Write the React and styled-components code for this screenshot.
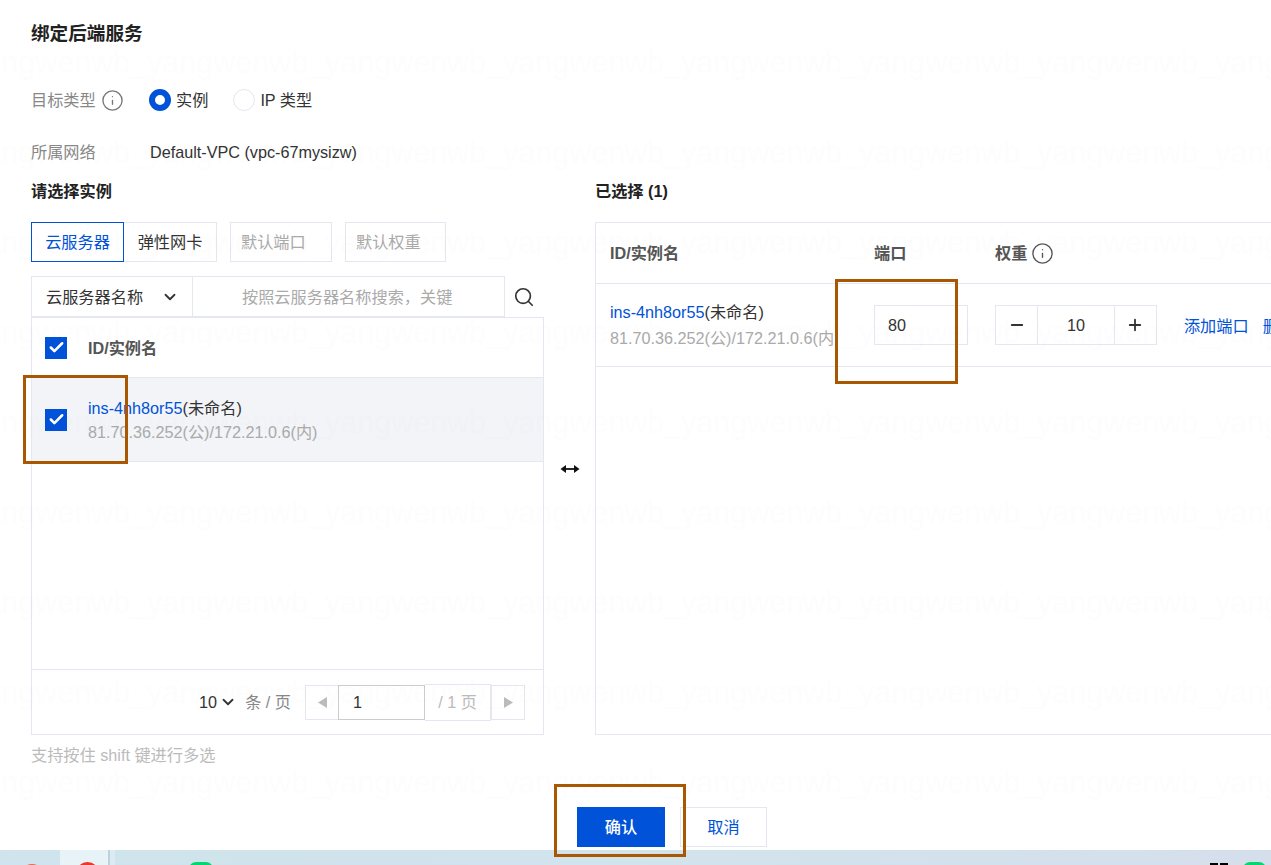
import styled, { createGlobalStyle } from "styled-components";
import { Check, ChevronDown, Info, Minus, Plus, Search } from "lucide-react";

const GlobalStyle = createGlobalStyle`
  html, body {
    margin: 0;
    padding: 0;
    background: #fff;
  }
  * {
    box-sizing: border-box;
  }
`;

const BORDER = "#e4e7f0";
const BLUE = "#0052d9";

// tiled account watermark, same way the console paints it
const WATERMARK_SVG = encodeURIComponent(
  `<svg xmlns="http://www.w3.org/2000/svg" width="178" height="90"><g font-family="Liberation Sans" font-size="30.5" fill="#000" fill-opacity=".006"><text x="-31" y="73">yangwenwb_</text><text x="147" y="73">yangwenwb_</text></g></svg>`
);

const Page = styled.div`
  position: relative;
  width: 1271px;
  height: 865px;
  overflow: hidden;
  background: #fff;
  color: #222;
  font-family: "Liberation Sans", "Noto Sans CJK SC", sans-serif;
  font-size: 16.2px;
  line-height: 24px;
`;

const Content = styled.div`
  height: 850px;
  padding: 22px 0 0 31px;
`;

const Title = styled.h2`
  margin: 0;
  font-size: 18.6px;
  line-height: 24px;
  font-weight: 700;
  color: #222;
`;

const FormRow = styled.div`
  display: flex;
  align-items: center;
  height: 24px;
  margin-top: ${(p) => p.$top}px;
`;

const Label = styled.div`
  width: 119px;
  flex: none;
  color: #888;
`;

const TypeLabel = styled(Label)`
  width: 118px;
  display: flex;
  align-items: center;
  gap: 5px;
`;

const RadioItem = styled.div`
  display: flex;
  align-items: center;
  gap: 5px;
  margin-right: 25px;
  color: #333;
`;

const RadioMark = styled.span`
  width: 22px;
  height: 22px;
  border-radius: 50%;
  background: #fff;
  border: ${(p) => (p.$on ? `6px solid ${BLUE}` : `1px solid ${BORDER}`)};
`;

const Value = styled.div`
  color: #333;
`;

const Columns = styled.div`
  display: flex;
  margin-top: 15px;
`;

const LeftColumn = styled.div`
  width: 513px;
  flex: none;
`;

const RightColumn = styled.div`
  width: 700px;
  flex: none;
`;

const Middle = styled.div`
  width: 51px;
  flex: none;
  display: flex;
  justify-content: center;
  padding-top: 285px;
`;

const SectionTitle = styled.div`
  font-weight: 700;
  color: #222;
  height: 24px;
`;

const Toolbar = styled.div`
  display: flex;
  margin-top: 19px;
`;

const Tab = styled.div`
  width: 93px;
  height: 40px;
  display: flex;
  align-items: center;
  justify-content: center;
  border: 1px solid ${(p) => (p.$active ? BLUE : BORDER)};
  border-left-width: ${(p) => (p.$active ? 1 : 0)}px;
  color: ${(p) => (p.$active ? BLUE : "#333")};
`;

const FieldInput = styled.div`
  width: ${(p) => p.$w}px;
  height: 40px;
  margin-left: 13px;
  padding-left: 10px;
  display: flex;
  align-items: center;
  border: 1px solid ${BORDER};
  color: #aaa;
`;

const SearchRow = styled.div`
  display: flex;
  margin-top: 14px;
  height: 41px;
`;

const SelectBox = styled.div`
  width: 162px;
  display: flex;
  align-items: center;
  padding-left: 14px;
  gap: 18px;
  border: 1px solid ${BORDER};
  color: #333;
`;

const SearchInput = styled.div`
  width: 312px;
  padding-left: 49px;
  display: flex;
  align-items: center;
  border: 1px solid ${BORDER};
  border-left: 0;
  color: #aaa;
  white-space: nowrap;
  overflow: hidden;
`;

const SearchButton = styled.div`
  width: 38px;
  display: flex;
  align-items: center;
  justify-content: center;
  color: #333;
`;

const ListPanel = styled.div`
  height: 418px;
  display: flex;
  flex-direction: column;
  border: 1px solid ${BORDER};
`;

const ListHeader = styled.div`
  height: 59px;
  display: flex;
  align-items: center;
  padding-left: 13px;
  gap: 21px;
  font-weight: 700;
  color: #555;
`;

const ListRow = styled.div`
  height: 85px;
  display: flex;
  align-items: center;
  padding-left: 13px;
  gap: 21px;
  background: #f2f4f8;
  border-top: 1px solid ${BORDER};
  border-bottom: 1px solid ${BORDER};
`;

const CheckMark = styled.span`
  width: 22px;
  height: 22px;
  flex: none;
  display: flex;
  align-items: center;
  justify-content: center;
  background: ${BLUE};
  color: #fff;
`;

const InstanceText = styled.div`
  display: flex;
  flex-direction: column;
`;

const InstanceName = styled.div`
  color: #333;
  white-space: nowrap;
`;

const InstanceLink = styled.span`
  color: ${BLUE};
`;

const InstanceIp = styled.div`
  color: #aaa;
  white-space: nowrap;
`;

const Spacer = styled.div`
  flex: 1;
`;

const Pager = styled.div`
  height: 65px;
  display: flex;
  align-items: center;
  justify-content: flex-end;
  padding-right: 18px;
  border-top: 1px solid ${BORDER};
`;

const PageSize = styled.div`
  display: flex;
  align-items: center;
  gap: 2px;
  color: #333;
  margin-right: 14px;
`;

const PerPage = styled.span`
  margin-left: 6px;
  color: #888;
`;

const PagerButton = styled.div`
  width: 34px;
  height: 35px;
  display: flex;
  align-items: center;
  justify-content: center;
  border: 1px solid ${BORDER};
`;

const PageInput = styled.div`
  width: 87px;
  height: 35px;
  margin-left: -1px;
  padding-left: 14px;
  display: flex;
  align-items: center;
  border: 1px solid #ccc;
  color: #333;
`;

const PageTotal = styled.div`
  width: 66px;
  height: 37px;
  display: flex;
  align-items: center;
  justify-content: center;
  border: 1px solid ${BORDER};
  border-left: 0;
  color: #bbb;
`;

const Hint = styled.div`
  margin-top: 8px;
  color: #bbb;
`;

const SelectedPanel = styled.div`
  height: 513px;
  margin-top: 19px;
  border: 1px solid ${BORDER};
  border-right: 0;
`;

const SelectedHeader = styled.div`
  height: 61px;
  display: flex;
  align-items: center;
  font-weight: 700;
  color: #555;
  border-bottom: 1px solid ${BORDER};
`;

const ColName = styled.div`
  width: 278px;
  flex: none;
  padding-left: 14px;
`;

const NameClip = styled.div`
  width: 224px;
  overflow: hidden;
  line-height: 26px;
`;

const ColPort = styled.div`
  width: 121px;
  flex: none;
`;

const ColWeight = styled.div`
  display: flex;
  align-items: center;
  gap: 4px;
`;

const SelectedRow = styled.div`
  height: 83px;
  display: flex;
  align-items: center;
  border-bottom: 1px solid ${BORDER};
`;

const PortInput = styled.div`
  width: 94px;
  height: 40px;
  padding-left: 13px;
  display: flex;
  align-items: center;
  border: 1px solid ${BORDER};
  color: #333;
`;

const Stepper = styled.div`
  display: flex;
  width: 162px;
  height: 40px;
  border: 1px solid ${BORDER};
  color: #333;
`;

const StepButton = styled.div`
  width: 41px;
  display: flex;
  align-items: center;
  justify-content: center;
`;

const StepValue = styled.div`
  flex: 1;
  display: flex;
  align-items: center;
  justify-content: center;
  border-left: 1px solid ${BORDER};
  border-right: 1px solid ${BORDER};
`;

const Actions = styled.div`
  display: flex;
  gap: 14px;
  margin: 1px 0 0 27px;
  color: ${BLUE};
  white-space: nowrap;
`;

const Footer = styled.div`
  display: flex;
  gap: 15px;
  margin: 40px 0 0 546px;
`;

const PrimaryButton = styled.div`
  width: 88px;
  height: 40px;
  display: flex;
  align-items: center;
  justify-content: center;
  background: ${BLUE};
  color: #fff;
  font-weight: 500;
`;

const GhostButton = styled.div`
  width: 87px;
  height: 40px;
  display: flex;
  align-items: center;
  justify-content: center;
  border: 1px solid ${BORDER};
  color: ${BLUE};
`;

const Taskbar = styled.div`
  position: relative;
  height: 15px;
  overflow: hidden;
  background: linear-gradient(90deg, #cfe4ec 0%, #d2e3ec 60%, #d5dfeb 100%);
`;

const TaskItem = styled.div`
  position: absolute;
  left: 60px;
  top: 0;
  width: 48px;
  height: 15px;
  background: #e8f3f8;
`;

const TaskEdge = styled.div`
  position: absolute;
  left: 108px;
  top: 0;
  width: 7px;
  height: 15px;
  border-left: 2px solid #bdd2de;
  background: #dcebf2;
`;

const TaskIcon = styled.div`
  position: absolute;
  left: ${(p) => p.$x}px;
  top: ${(p) => p.$y}px;
  width: ${(p) => p.$w}px;
  height: 24px;
  border-radius: ${(p) => p.$r}px;
  background: ${(p) => p.$c};
`;

const Highlight = styled.div`
  position: absolute;
  left: ${(p) => p.$x}px;
  top: ${(p) => p.$y}px;
  width: ${(p) => p.$w}px;
  height: ${(p) => p.$h}px;
  border: 3px solid #a95700;
  pointer-events: none;
`;

const Watermark = styled.div`
  position: absolute;
  left: 0;
  top: 0;
  width: 1271px;
  height: 850px;
  background-image: url("data:image/svg+xml,${WATERMARK_SVG}");
  pointer-events: none;
`;

function ArrowBoth() {
  return (
    <svg width="20" height="10" viewBox="0 0 20 10">
      <path d="M5 5h10" stroke="#111" strokeWidth="1.8" />
      <path d="M0.5 5L6 1v8zM19.5 5L14 1v8z" fill="#111" />
    </svg>
  );
}

function PagerArrow({ left }) {
  return (
    <svg width="9" height="11" viewBox="0 0 9 11">
      <path d={left ? "M9 0v11L0 5.5z" : "M0 0v11l9-5.5z"} fill="#bbb" />
    </svg>
  );
}

function App() {
  return (
    <Page>
      <GlobalStyle />
      <Content>
        <Title>绑定后端服务</Title>
        <FormRow $top={42}>
          <TypeLabel>
            目标类型
            <Info size={23} color="#777" strokeWidth={1.4} />
          </TypeLabel>
          <RadioItem>
            <RadioMark $on />
            实例
          </RadioItem>
          <RadioItem>
            <RadioMark />
            IP 类型
          </RadioItem>
        </FormRow>
        <FormRow $top={28}>
          <Label>所属网络</Label>
          <Value>Default-VPC (vpc-67mysizw)</Value>
        </FormRow>
        <Columns>
          <LeftColumn>
            <SectionTitle>请选择实例</SectionTitle>
            <Toolbar>
              <Tab $active>云服务器</Tab>
              <Tab>弹性网卡</Tab>
              <FieldInput $w={102}>默认端口</FieldInput>
              <FieldInput $w={101}>默认权重</FieldInput>
            </Toolbar>
            <SearchRow>
              <SelectBox>
                云服务器名称
                <ChevronDown size={18} strokeWidth={2.4} />
              </SelectBox>
              <SearchInput>按照云服务器名称搜索，关键</SearchInput>
              <SearchButton>
                <Search size={22} strokeWidth={1.8} />
              </SearchButton>
            </SearchRow>
            <ListPanel>
              <ListHeader>
                <CheckMark>
                  <Check size={17} strokeWidth={3.6} />
                </CheckMark>
                ID/实例名
              </ListHeader>
              <ListRow>
                <CheckMark>
                  <Check size={17} strokeWidth={3.6} />
                </CheckMark>
                <InstanceText>
                  <InstanceName>
                    <InstanceLink>ins-4nh8or55</InstanceLink>(未命名)
                  </InstanceName>
                  <InstanceIp>81.70.36.252(公)/172.21.0.6(内)</InstanceIp>
                </InstanceText>
              </ListRow>
              <Spacer />
              <Pager>
                <PageSize>
                  10
                  <ChevronDown size={18} strokeWidth={2.4} />
                  <PerPage>条 / 页</PerPage>
                </PageSize>
                <PagerButton>
                  <PagerArrow left />
                </PagerButton>
                <PageInput>1</PageInput>
                <PageTotal>/ 1 页</PageTotal>
                <PagerButton>
                  <PagerArrow />
                </PagerButton>
              </Pager>
            </ListPanel>
            <Hint>支持按住 shift 键进行多选</Hint>
          </LeftColumn>
          <Middle>
            <ArrowBoth />
          </Middle>
          <RightColumn>
            <SectionTitle>已选择 (1)</SectionTitle>
            <SelectedPanel>
              <SelectedHeader>
                <ColName>ID/实例名</ColName>
                <ColPort>端口</ColPort>
                <ColWeight>
                  权重
                  <Info size={23} color="#555" strokeWidth={1.4} />
                </ColWeight>
              </SelectedHeader>
              <SelectedRow>
                <ColName>
                  <NameClip>
                    <InstanceName>
                      <InstanceLink>ins-4nh8or55</InstanceLink>(未命名)
                    </InstanceName>
                    <InstanceIp>81.70.36.252(公)/172.21.0.6(内)</InstanceIp>
                  </NameClip>
                </ColName>
                <ColPort>
                  <PortInput>80</PortInput>
                </ColPort>
                <Stepper>
                  <StepButton>
                    <Minus size={18} strokeWidth={2.4} />
                  </StepButton>
                  <StepValue>10</StepValue>
                  <StepButton>
                    <Plus size={18} strokeWidth={2.4} />
                  </StepButton>
                </Stepper>
                <Actions>
                  <span>添加端口</span>
                  <span>删除</span>
                </Actions>
              </SelectedRow>
            </SelectedPanel>
          </RightColumn>
        </Columns>
        <Footer>
          <PrimaryButton>确认</PrimaryButton>
          <GhostButton>取消</GhostButton>
        </Footer>
      </Content>
      <Taskbar>
        <TaskItem />
        <TaskEdge />
        <TaskIcon $x={20} $y={14} $w={24} $r={12} $c="#e8694a" />
        <TaskIcon $x={76} $y={12} $w={23} $r={12} $c="#e8392b" />
        <TaskIcon $x={189} $y={12} $w={24} $r={7} $c="#00d96f" />
        <TaskIcon $x={1210} $y={13} $w={8} $r={0} $c="#000" />
        <TaskIcon $x={1220} $y={13} $w={8} $r={0} $c="#000" />
        <TaskIcon $x={1243} $y={12} $w={23} $r={7} $c="#00d96f" />
      </Taskbar>
      <Watermark />
      <Highlight $x={23} $y={375} $w={105} $h={89} />
      <Highlight $x={835} $y={279} $w={123} $h={105} />
      <Highlight $x={554} $y={784} $w={132} $h={73} />
    </Page>
  );
}

export default App;
